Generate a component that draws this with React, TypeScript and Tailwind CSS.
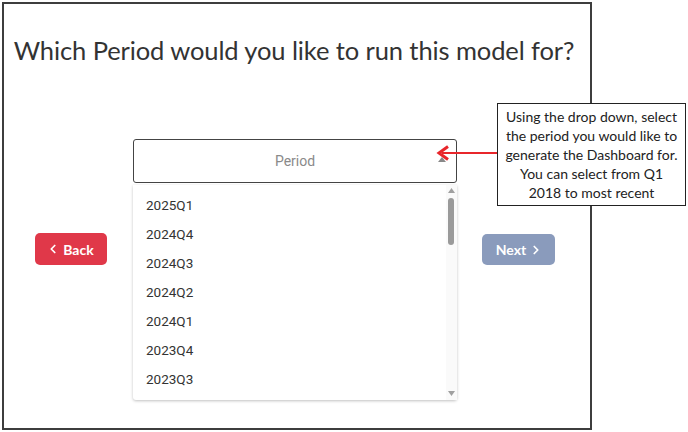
import { ChevronLeft, ChevronRight } from "lucide-react";

const periods = ["2025Q1", "2024Q4", "2024Q3", "2024Q2", "2024Q1", "2023Q4", "2023Q3"];

export default function App() {
  return (
    <div className="relative h-[432px] w-[688px] overflow-hidden bg-white">
      <div className="ml-[2px] mt-[2px] h-[428px] w-[590px] border-2 border-[#3d3d3d] bg-white">
        <h1 className="whitespace-nowrap pr-[6px] pt-[28px] text-center font-['Lato',sans-serif] text-[25.5px] leading-[36px] tracking-[-0.1px] text-[#333]">
          Which Period would you like to run this model for?
        </h1>

        <div className="mt-[71px] flex items-start pl-[31px]">
          <button className="mt-[94px] flex h-[32px] w-[72px] items-center justify-center gap-[3px] rounded-[5px] bg-[#e03849] pr-[2px] font-['Lato',sans-serif] text-[14px] font-bold text-white">
            <ChevronLeft className="h-[14px] w-[14px]" strokeWidth={3} />
            Back
          </button>

          <div className="relative ml-[26px] w-[324px]">
            <div className="flex h-[44px] items-center justify-center rounded-[3px] border-[1.5px] border-[#444] bg-white">
              <span className="font-['Roboto',sans-serif] text-[14px] text-[#8a8a8a]">Period</span>
              <svg className="absolute right-[11px] top-[18px]" width="8" height="5" viewBox="0 0 8 5">
                <path d="M0 5 L4 0 L8 5 Z" fill="#888" />
              </svg>
            </div>

            <div className="absolute left-0 top-[46px] z-10 flex h-[215px] w-[324px] rounded-b-[3px] bg-white shadow-[0_1px_3px_rgba(0,0,0,0.25)]">
              <ul className="flex-1 pt-[6px]">
                {periods.map((p) => (
                  <li key={p} className="flex h-[29px] items-center pl-[13px] font-['Roboto',sans-serif] text-[13.5px] text-[#333]">
                    {p}
                  </li>
                ))}
              </ul>
              <div className="relative w-[11px] bg-[#fafafa]">
                <svg className="absolute left-[2px] top-[3px]" width="7" height="5" viewBox="0 0 7 5">
                  <path d="M0 5 L3.5 0 L7 5 Z" fill="#a0a0a0" />
                </svg>
                <div className="absolute left-[2px] top-[13px] h-[47px] w-[6px] rounded-full bg-[#9a9a9a]" />
                <svg className="absolute bottom-[4px] left-[2px]" width="7" height="5" viewBox="0 0 7 5">
                  <path d="M0 0 L3.5 5 L7 0 Z" fill="#a0a0a0" />
                </svg>
              </div>
            </div>
          </div>

          <button className="ml-[25px] mt-[95px] flex h-[31px] w-[73px] items-center justify-center gap-[3px] rounded-[5px] bg-[#8a9bbc] pl-[2px] font-['Lato',sans-serif] text-[14px] font-bold text-white">
            Next
            <ChevronRight className="h-[14px] w-[14px]" strokeWidth={3} />
          </button>
        </div>
      </div>

      <svg className="absolute left-[436px] top-[145px]" width="62" height="16" viewBox="0 0 62 16">
        <line x1="6" y1="8" x2="62" y2="8" stroke="#e8262b" strokeWidth="2" />
        <path d="M12 1.5 L3 8 L12 14.5" fill="none" stroke="#e8262b" strokeWidth="3" strokeLinejoin="miter" />
      </svg>

      <div className="absolute left-[497px] top-[103px] flex h-[103px] w-[189px] items-center justify-center border-[1.5px] border-[#222] bg-white">
        <p className="whitespace-nowrap text-center font-['Lato',sans-serif] text-[14px] leading-[19px] text-[#222]">
          Using the drop down, select
          <br />
          the period you would like to
          <br />
          generate the Dashboard for.
          <br />
          You can select from Q1
          <br />
          2018 to most recent
        </p>
      </div>
    </div>
  );
}
